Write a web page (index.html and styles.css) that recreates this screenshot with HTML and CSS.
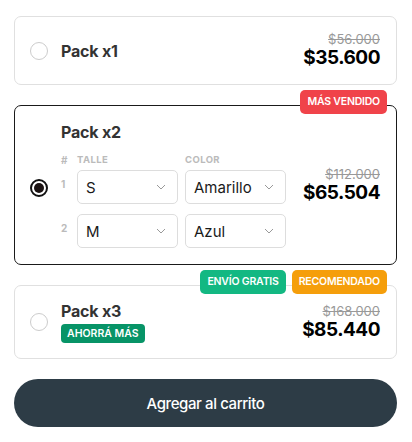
FILE: index.html
```html
<!DOCTYPE html>
<html>
<head>
  <meta name="viewport" content="width=device-width, initial-scale=1.0">
  <title>Packs</title>
  <link rel="stylesheet" href="styles.css">
</head>
<body>
  <div class="bundle">

    <label class="pack">
      <span class="radio"></span>
      <div class="pack-info">
        <div class="pack-title">Pack x1</div>
      </div>
      <div class="price">
        <s class="old">$56.000</s>
        <span class="now">$35.600</span>
      </div>
    </label>

    <label class="pack selected">
      <div class="badges">
        <span class="badge red">MÁS VENDIDO</span>
      </div>
      <span class="radio checked"></span>
      <div class="pack-info">
        <div class="pack-title">Pack x2</div>
        <div class="variants">
          <div class="variant-row head">
            <span class="num">#</span>
            <span class="col">TALLE</span>
            <span class="col">COLOR</span>
          </div>
          <div class="variant-row">
            <span class="num">1</span>
            <div class="select"><span>S</span><svg width="10" height="6" viewBox="0 0 10 6"><path d="M1 1l4 4 4-4" fill="none" stroke="#999" stroke-width="1"/></svg></div>
            <div class="select"><span>Amarillo</span><svg width="10" height="6" viewBox="0 0 10 6"><path d="M1 1l4 4 4-4" fill="none" stroke="#999" stroke-width="1"/></svg></div>
          </div>
          <div class="variant-row">
            <span class="num">2</span>
            <div class="select"><span>M</span><svg width="10" height="6" viewBox="0 0 10 6"><path d="M1 1l4 4 4-4" fill="none" stroke="#999" stroke-width="1"/></svg></div>
            <div class="select"><span>Azul</span><svg width="10" height="6" viewBox="0 0 10 6"><path d="M1 1l4 4 4-4" fill="none" stroke="#999" stroke-width="1"/></svg></div>
          </div>
        </div>
      </div>
      <div class="price">
        <s class="old">$112.000</s>
        <span class="now">$65.504</span>
      </div>
    </label>

    <label class="pack">
      <div class="badges">
        <span class="badge green">ENVÍO GRATIS</span>
        <span class="badge orange">RECOMENDADO</span>
      </div>
      <span class="radio"></span>
      <div class="pack-info">
        <div class="pack-title">Pack x3</div>
        <span class="tag">AHORRÁ MÁS</span>
      </div>
      <div class="price">
        <s class="old">$168.000</s>
        <span class="now">$85.440</span>
      </div>
    </label>

    <button class="add-to-cart">Agregar al carrito</button>
  </div>
</body>
</html>
```

FILE: styles.css
```css
body {
  margin: 0;
  background-color: #fff;
  font-family: Inter, "Noto Sans", sans-serif;
  color: #222;
}

.bundle {
  display: flex;
  flex-direction: column;
  gap: 20px;
  padding: 16px 15px 16px 14px;
}

.pack {
  position: relative;
  display: flex;
  align-items: center;
  gap: 13px;
  padding: 15px 16px 15px 15px;
  border: 1px solid #e0e0e0;
  border-radius: 7px;
  cursor: pointer;
}

.pack.selected {
  border-color: #1a1a1a;
  padding: 16px 16px 16px 15px;
}

.radio {
  flex: none;
  width: 18px;
  height: 18px;
  border: 1px solid #ccc;
  border-radius: 50%;
  box-sizing: border-box;
}

.radio.checked {
  border: 2px solid #111;
  display: flex;
  align-items: center;
  justify-content: center;
  margin-top: 6px;
}

.radio.checked::after {
  content: "";
  width: 10px;
  height: 10px;
  border-radius: 50%;
  background-color: #1a1212;
}

.pack-info {
  flex: 1;
  display: flex;
  flex-direction: column;
  align-items: flex-start;
}

.pack-title {
  font-size: 16px;
  line-height: 20px;
  font-weight: 700;
  color: #333;
  letter-spacing: -0.2px;
}

.price {
  display: flex;
  flex-direction: column;
  align-items: flex-end;
}

.price .old {
  font-size: 13px;
  line-height: 15px;
  color: #999;
}

.price .now {
  font-size: 19px;
  line-height: 22px;
  font-weight: 700;
  color: #000;
  letter-spacing: -0.5px;
}

.variants {
  display: flex;
  flex-direction: column;
  gap: 10px;
  margin-top: 12px;
}

.variant-row {
  display: flex;
  align-items: center;
  gap: 7px;
}

.variant-row.head {
  margin-bottom: -6px;
}

.num {
  width: 9px;
  font-size: 10px;
  font-weight: 700;
  color: #bbb;
  margin-top: -6px;
}

.variant-row.head .num {
  margin-top: 0;
}

.col {
  width: 101px;
  font-size: 9.5px;
  line-height: 12px;
  font-weight: 700;
  color: #bbb;
  letter-spacing: 0.4px;
}

.select {
  width: 101px;
  height: 34px;
  box-sizing: border-box;
  display: flex;
  align-items: center;
  justify-content: space-between;
  padding: 0 11px 0 8px;
  border: 1px solid #ddd;
  border-radius: 5px;
  font-size: 15px;
  color: #1a1a1a;
}

.badges {
  position: absolute;
  top: -16px;
  right: 9px;
  display: flex;
  gap: 6px;
}

.badge {
  height: 24px;
  line-height: 24px;
  padding: 0 7px;
  border-radius: 5px;
  font-size: 10.5px;
  font-weight: 600;
  color: #fff;
  letter-spacing: -0.2px;
}

.badge.red {
  background-color: #f0434a;
}

.badge.green {
  background-color: #13b882;
}

.badge.orange {
  background-color: #f59e0b;
}

.tag {
  margin-top: 3px;
  height: 19px;
  line-height: 19px;
  padding: 0 6px;
  border-radius: 4px;
  background-color: #079467;
  color: #fff;
  font-size: 10.5px;
  font-weight: 600;
}

.add-to-cart {
  height: 48px;
  border: none;
  border-radius: 24px;
  background-color: #2d3c46;
  color: #fff;
  font-family: Inter, "Noto Sans", sans-serif;
  font-size: 15px;
  font-weight: 500;
  letter-spacing: -0.4px;
  cursor: pointer;
}
```
